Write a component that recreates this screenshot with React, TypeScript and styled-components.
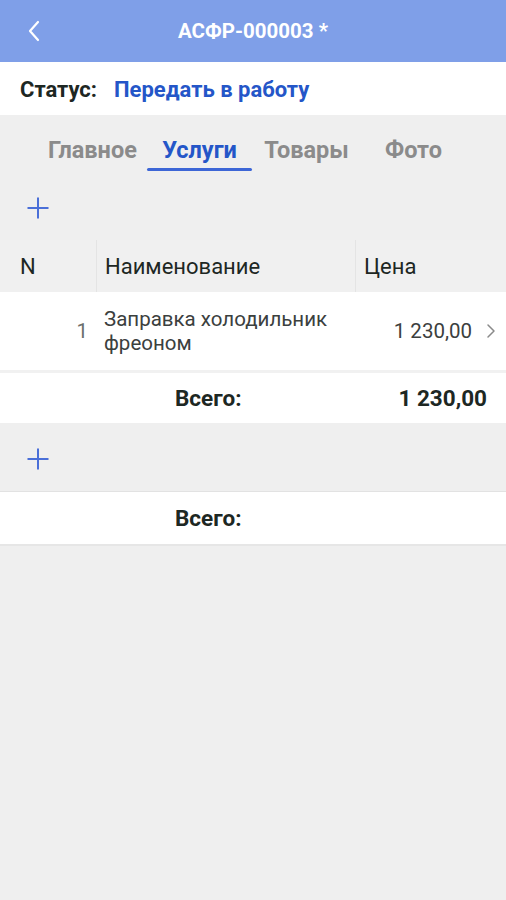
import styled, { createGlobalStyle } from 'styled-components';

const GlobalStyle = createGlobalStyle`
  html, body {
    margin: 0;
    padding: 0;
    background: #efefef;
  }
  body {
    font-family: Roboto, "Noto Sans", Arial, sans-serif;
    color: #1d2723;
  }
`;

const Screen = styled.div`
  width: 506px;
  min-height: 900px;
  background: #efefef;
  display: flex;
  flex-direction: column;
`;

const TopBar = styled.header`
  height: 62px;
  background: #7f9fe8;
  display: flex;
  align-items: center;
  position: relative;
  justify-content: center;
`;

const BackButton = styled.button`
  position: absolute;
  left: 22px;
  top: 18px;
  width: 24px;
  height: 26px;
  border: 0;
  padding: 0;
  background: none;
  display: flex;
  align-items: center;
  justify-content: center;
`;

const Title = styled.h1`
  margin: 0;
  font-size: 20.5px;
  font-weight: 700;
  color: #ffffff;
`;

const StatusBar = styled.div`
  height: 53px;
  background: #ffffff;
  display: flex;
  align-items: center;
  padding: 2px 20px 0;
  box-sizing: border-box;
  gap: 17px;
  font-size: 22px;
  font-weight: 700;
`;

const StatusLabel = styled.span`
  color: #1d2723;
`;

const StatusValue = styled.span`
  color: #2456c8;
`;

const Tabs = styled.nav`
  display: grid;
  grid-template-columns: repeat(4, 107px);
  justify-content: center;
  padding-top: 21px;
  height: 56px;
  box-sizing: border-box;
`;

const Tab = styled.div<{ $active?: boolean }>`
  font-size: 23.5px;
  font-weight: 700;
  text-align: center;
  color: ${({ $active }) => ($active ? '#2456c8' : '#8b8b8b')};
  position: relative;
  height: 35px;
  &::after {
    content: '';
    display: ${({ $active }) => ($active ? 'block' : 'none')};
    position: absolute;
    left: 1px;
    right: 1px;
    bottom: 0;
    height: 3px;
    border-radius: 2px;
    background: #3d66d6;
  }
`;

const AddBar = styled.div<{ $tall?: boolean }>`
  height: ${({ $tall }) => ($tall ? '68px' : '69px')};
  box-sizing: border-box;
  display: flex;
  align-items: center;
  padding: 4px 0 0 26px;
`;

const TableHead = styled.div`
  display: grid;
  grid-template-columns: 96px 259px 1fr;
  height: 52px;
  background: #f0f0f0;
  font-size: 22px;
  color: #1d2723;
`;

const HeadCell = styled.div`
  display: flex;
  align-items: center;
  padding-left: 8px;
  & + & {
    border-left: 1px solid #e4e4e4;
  }
  &:first-child {
    padding-left: 20px;
  }
`;

const Row = styled.div`
  display: grid;
  grid-template-columns: 88px 258px 126px 1fr;
  height: 78px;
  background: #ffffff;
  align-items: center;
  font-size: 20.5px;
  color: #3b403e;
  border-bottom: 3px solid #f1f1f1;
`;

const NumCell = styled.div`
  text-align: right;
  color: #6a6e6c;
`;

const NameCell = styled.div`
  padding-left: 16px;
  line-height: 24px;
  white-space: nowrap;
`;

const PriceCell = styled.div`
  text-align: right;
`;

const Chevron = styled.div`
  display: flex;
  justify-content: center;
  padding-left: 4px;
`;

const TotalRow = styled.div<{ $bordered?: boolean }>`
  display: grid;
  grid-template-columns: 175px 1fr auto;
  align-items: center;
  height: ${({ $bordered }) => ($bordered ? '52px' : '50px')};
  background: #ffffff;
  padding-right: 19px;
  font-size: 22.5px;
  font-weight: 700;
  color: #1d2723;
  border-top: ${({ $bordered }) => ($bordered ? '1px solid #e2e2e2' : 'none')};
  border-bottom: ${({ $bordered }) => ($bordered ? '2px solid #e6e6e6' : 'none')};
`;

const TotalLabel = styled.span`
  grid-column: 2;
`;

const TotalValue = styled.span`
  grid-column: 3;
`;

const PlusIcon = () => (
  <svg width="24" height="24" viewBox="0 0 24 24">
    <path d="M12 1.5v21M1.5 12h21" stroke="#4a6fd8" strokeWidth="2" fill="none" />
  </svg>
);

export default function App() {
  return (
    <>
      <GlobalStyle />
      <Screen>
        <TopBar>
          <BackButton aria-label="Назад">
            <svg width="14" height="22" viewBox="0 0 14 22">
              <path d="M11 2L3 11l8 9" stroke="#ffffff" strokeWidth="2.2" fill="none" strokeLinecap="round" strokeLinejoin="round" />
            </svg>
          </BackButton>
          <Title>АСФР-000003 *</Title>
        </TopBar>

        <StatusBar>
          <StatusLabel>Статус:</StatusLabel>
          <StatusValue>Передать в работу</StatusValue>
        </StatusBar>

        <Tabs>
          <Tab>Главное</Tab>
          <Tab $active>Услуги</Tab>
          <Tab>Товары</Tab>
          <Tab>Фото</Tab>
        </Tabs>

        <AddBar>
          <PlusIcon />
        </AddBar>

        <TableHead>
          <HeadCell>N</HeadCell>
          <HeadCell>Наименование</HeadCell>
          <HeadCell>Цена</HeadCell>
        </TableHead>

        <Row>
          <NumCell>1</NumCell>
          <NameCell>
            Заправка холодильник
            <br />
            фреоном
          </NameCell>
          <PriceCell>1 230,00</PriceCell>
          <Chevron>
            <svg width="10" height="16" viewBox="0 0 10 16">
              <path d="M2 2l6 6-6 6" stroke="#8a8a8a" strokeWidth="1.5" fill="none" strokeLinecap="round" strokeLinejoin="round" />
            </svg>
          </Chevron>
        </Row>

        <TotalRow>
          <TotalLabel>Всего:</TotalLabel>
          <TotalValue>1 230,00</TotalValue>
        </TotalRow>

        <AddBar $tall>
          <PlusIcon />
        </AddBar>

        <TotalRow $bordered>
          <TotalLabel>Всего:</TotalLabel>
          <TotalValue />
        </TotalRow>
      </Screen>
    </>
  );
}
